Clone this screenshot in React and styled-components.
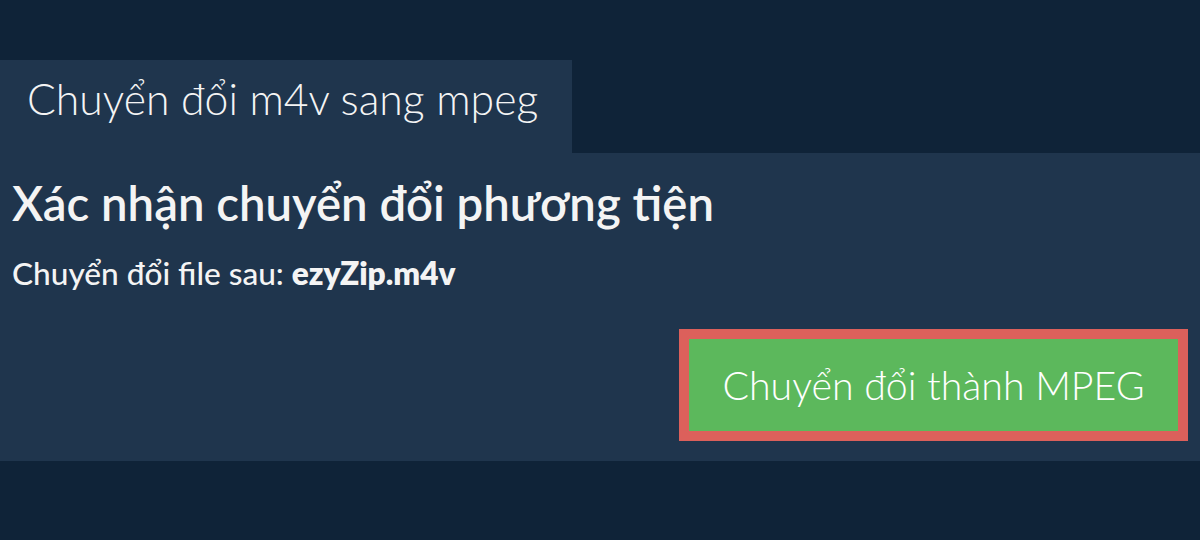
import React from 'react'
import styled, { createGlobalStyle } from 'styled-components'

const GlobalStyle = createGlobalStyle`
  html, body {
    margin: 0;
    padding: 0;
    background: #0f2338;
  }
  body {
    font-family: Lato, "Noto Sans", "Liberation Sans", sans-serif;
    color: #f2f2f2;
  }
`

const Page = styled.div`
  width: 1200px;
  height: 540px;
  padding-top: 60px;
  box-sizing: border-box;
  background: #0f2338;
`

const Tab = styled.div`
  width: 572px;
  height: 93px;
  box-sizing: border-box;
  padding: 13px 0 0 27px;
  background: #1f354d;
  font-size: 42.7px;
  font-weight: 300;
  line-height: 1.2;
  color: #f4f4f4;
`

const Panel = styled.div`
  background: #1f354d;
  height: 308px;
  box-sizing: border-box;
  padding: 22px 12px 0;
  display: flex;
  flex-direction: column;
`

const Title = styled.h1`
  margin: 0;
  font-size: 47.3px;
  font-weight: 600;
  line-height: 1.2;
  color: #f4f4f4;
`

const Subtitle = styled.p`
  margin: 23px 0 0;
  font-size: 31.6px;
  font-weight: 500;
  line-height: 1.2;
  color: #f4f4f4;
`

const FileName = styled.b`
  font-weight: 800;
`

const Actions = styled.div`
  display: flex;
  justify-content: flex-end;
  margin-top: 36px;
`

const ConvertButton = styled.button`
  width: 509px;
  height: 112px;
  box-sizing: border-box;
  border: 10px solid #dc605b;
  background: #5cb85c;
  color: #ffffff;
  font-family: inherit;
  font-size: 39.3px;
  font-weight: 300;
  cursor: pointer;
  padding: 0;
`

export default function App() {
  return (
    <Page>
      <GlobalStyle />
      <Tab>Chuyển đổi m4v sang mpeg</Tab>
      <Panel>
        <Title>Xác nhận chuyển đổi phương tiện</Title>
        <Subtitle>
          Chuyển đổi file sau: <FileName>ezyZip.m4v</FileName>
        </Subtitle>
        <Actions>
          <ConvertButton>Chuyển đổi thành MPEG</ConvertButton>
        </Actions>
      </Panel>
    </Page>
  )
}
